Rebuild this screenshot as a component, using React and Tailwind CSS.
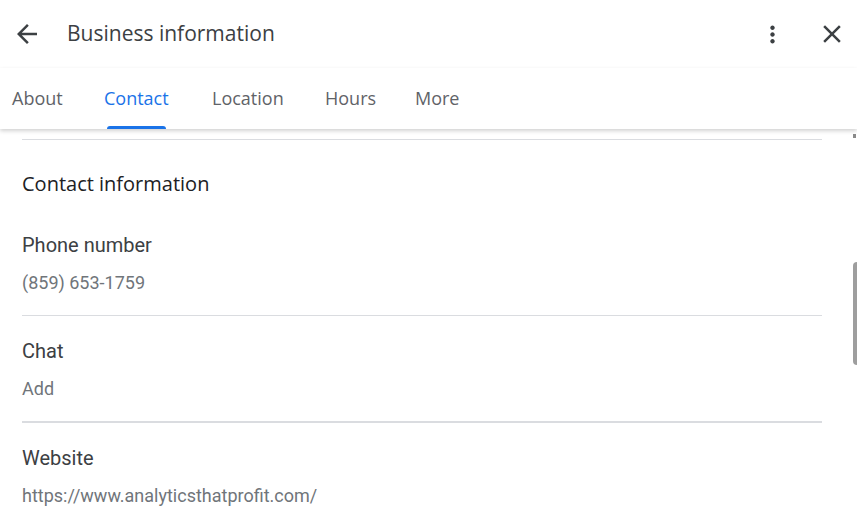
import React from 'react'

const gs = { fontFamily: '"Open Sans", Roboto, sans-serif' }

const Icon = ({ d, className }) => (
  <svg viewBox="0 0 24 24" className={className} fill="currentColor"><path d={d} /></svg>
)

const ARROW = 'M20 11H7.83l5.59-5.59L12 4l-8 8 8 8 1.41-1.41L7.83 13H20v-2z'
const DOTS = 'M12 8c1.1 0 2-.9 2-2s-.9-2-2-2-2 .9-2 2 .9 2 2 2zm0 2c-1.1 0-2 .9-2 2s.9 2 2 2 2-.9 2-2-.9-2-2-2zm0 6c-1.1 0-2 .9-2 2s.9 2 2 2 2-.9 2-2-.9-2-2-2z'
const CLOSE = 'M19 6.41L17.59 5 12 10.59 6.41 5 5 6.41 10.59 12 5 17.59 6.41 19 12 13.41 17.59 19 19 17.59 13.41 12z'

const tabs = [
  ['About', 'w-[92px]'],
  ['Contact', 'w-[108px]'],
  ['Location', 'w-[113px]'],
  ['Hours', 'w-[90px]'],
  ['More', 'w-[60px]'],
]

const Field = ({ label, value, divider }) => (
  <div className={divider}>
    <div className="text-[20px] leading-[26px] text-[#3c4043]">{label}</div>
    <div className="mt-[13px] text-[18px] leading-[24px] text-[#70757a]">{value}</div>
  </div>
)

export default function App() {
  return (
    <div className="h-[525px] w-[857px] bg-white flex flex-col overflow-hidden relative" style={{ fontFamily: 'Roboto, "Liberation Sans", sans-serif' }}>
      <header className="h-[68px] shrink-0 flex items-center">
        <button className="ml-[12px] text-[#3c4043]">
          <Icon d={ARROW} className="w-[30px] h-[30px]" />
        </button>
        <h1 className="ml-[25px] text-[21px] text-[#3c4043]" style={gs}>Business information</h1>
        <div className="flex-1" />
        <Icon d={DOTS} className="w-[27px] h-[27px] text-[#3c4043]" />
        <Icon d={CLOSE} className="w-[30px] h-[30px] ml-[31px] mr-[10px] text-[#3c4043]" />
      </header>

      <nav className="h-[61px] shrink-0 flex items-stretch pl-[12px] shadow-[0_2px_4px_rgba(0,0,0,0.18)] z-10 bg-white">
        {tabs.map(([t, w]) => (
          <div key={t} className={`${w} flex flex-col justify-end shrink-0`}>
            <div className="inline-flex flex-col self-start">
              <span className={`text-[18px] leading-[24px] font-medium ${t === 'Contact' ? 'text-[#1a73e8]' : 'text-[#5f6368]'}`} style={gs}>{t}</span>
              <span className={`mt-[16px] mx-[3px] h-[3px] rounded-t-[3px] ${t === 'Contact' ? 'bg-[#1a73e8]' : 'bg-transparent'}`} />
            </div>
          </div>
        ))}
      </nav>

      <main className="flex-1 overflow-hidden pl-[22px] pr-[35px] pt-[10px]">
        <div className="border-t border-[#dadce0]" />
        <h2 className="mt-[31px] text-[20px] leading-[26px] text-[#202124]" style={gs}>Contact information</h2>
        <div className="mt-[35px]">
          <Field label="Phone number" value="(859) 653-1759" divider="pb-[20px] border-b border-[#dadce0]" />
          <Field label="Chat" value="Add" divider="pt-[22px] pb-[20px] border-b-2 border-[#dadce0]" />
          <Field label="Website" value="https://www.analyticsthatprofit.com/" divider="pt-[22px]" />
        </div>
      </main>

      <div className="absolute right-0 top-[262px] w-[4px] h-[103px] bg-[#9e9e9e] rounded-l-sm" />
      <div className="absolute right-[1px] top-[134px] w-[3px] h-[4px] bg-[#8a8a8a]" />
    </div>
  )
}
